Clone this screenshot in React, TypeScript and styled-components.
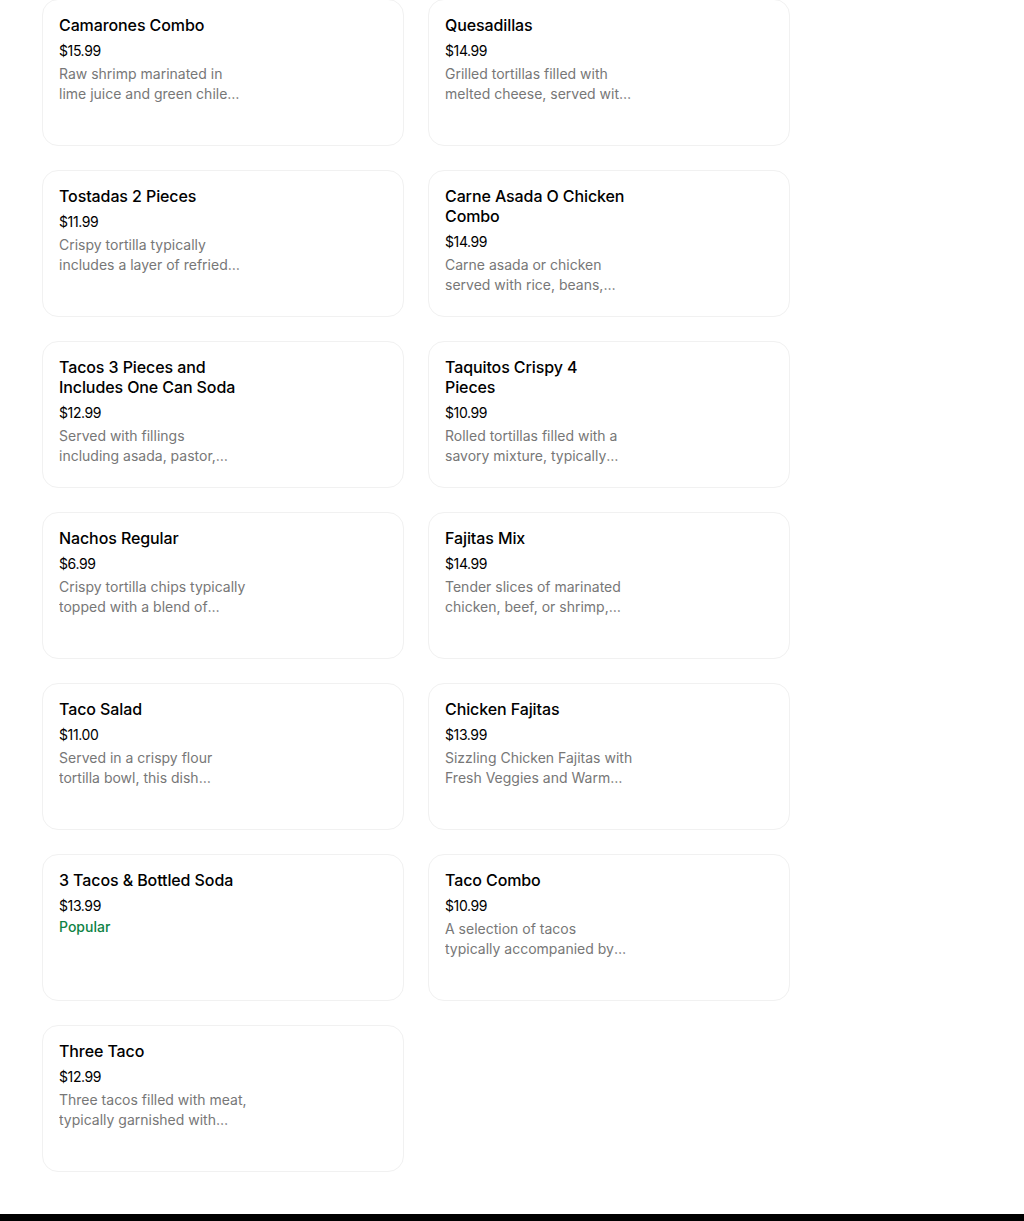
import * as React from 'react';
import styled, { createGlobalStyle } from 'styled-components';

type Item = {
  title: string;
  price: string;
  desc?: string;
  popular?: boolean;
};

const items: Item[] = [
  { title: 'Camarones Combo', price: '$15.99', desc: 'Raw shrimp marinated in lime juice and green chile sauce, served with onions and cucumber.' },
  { title: 'Quesadillas', price: '$14.99', desc: 'Grilled tortillas filled with melted cheese, served with sour cream and guacamole.' },
  { title: 'Tostadas 2 Pieces', price: '$11.99', desc: 'Crispy tortilla typically includes a layer of refried beans, lettuce and cheese.' },
  { title: 'Carne Asada O Chicken Combo', price: '$14.99', desc: 'Carne asada or chicken served with rice, beans, guacamole and tortillas.' },
  { title: 'Tacos 3 Pieces and Includes One Can Soda', price: '$12.99', desc: 'Served with fillings including asada, pastor, chicken or carnitas.' },
  { title: 'Taquitos Crispy 4 Pieces', price: '$10.99', desc: 'Rolled tortillas filled with a savory mixture, typically topped with cream.' },
  { title: 'Nachos Regular', price: '$6.99', desc: 'Crispy tortilla chips typically topped with a blend of cheeses and beans.' },
  { title: 'Fajitas Mix', price: '$14.99', desc: 'Tender slices of marinated chicken, beef, or shrimp, grilled with peppers.' },
  { title: 'Taco Salad', price: '$11.00', desc: 'Served in a crispy flour tortilla bowl, this dish includes lettuce and beans.' },
  { title: 'Chicken Fajitas', price: '$13.99', desc: 'Sizzling Chicken Fajitas with Fresh Veggies and Warm Tortillas.' },
  { title: '3 Tacos & Bottled Soda', price: '$13.99', popular: true },
  { title: 'Taco Combo', price: '$10.99', desc: 'A selection of tacos typically accompanied by rice and beans.' },
  { title: 'Three Taco', price: '$12.99', desc: 'Three tacos filled with meat, typically garnished with onions and cilantro.' },
];

const GlobalStyle = createGlobalStyle`
  body {
    margin: 0;
    background: #ffffff;
    font-family: Inter, "Open Sans", "Liberation Sans", sans-serif;
    color: #000000;
  }
`;

const App = () => {
  return (
    <>
      <GlobalStyle />
      <Page>
        <Grid>
          {items.map((item) => (
            <Card key={item.title}>
              <Info>
                <Title>{item.title}</Title>
                <Price>{item.price}</Price>
                {item.desc && <Desc>{item.desc}</Desc>}
                {item.popular && <Popular>Popular</Popular>}
              </Info>
            </Card>
          ))}
        </Grid>
      </Page>
      <Footer />
    </>
  );
};

export default App;

const Page = styled.div`
  margin-top: -1px;
  padding: 0 0 42px 42px;
`;

const Grid = styled.div`
  display: grid;
  grid-template-columns: 362px 362px;
  gap: 24px;
`;

const Card = styled.div`
  box-sizing: border-box;
  height: 147px;
  border: 1px solid #f1f1f1;
  border-radius: 16px;
  padding: 15px 16px;
  display: flex;
`;

const Info = styled.div`
  width: 188.5px;
  display: flex;
  flex-direction: column;
`;

const Title = styled.div`
  max-width: 184px;
  font-size: 16px;
  line-height: 20px;
  font-weight: 500;
  letter-spacing: -0.1px;
  color: #000000;
`;

const Price = styled.div`
  margin-top: 6px;
  font-size: 14px;
  line-height: 20px;
  color: #000000;
  letter-spacing: -0.4px;
`;

const Desc = styled.div`
  margin-top: 3px;
  font-size: 14px;
  line-height: 20px;
  color: #777777;
  display: -webkit-box;
  -webkit-line-clamp: 2;
  -webkit-box-orient: vertical;
  overflow: hidden;
`;

const Popular = styled.div`
  margin-top: 1px;
  font-size: 14px;
  line-height: 20px;
  font-weight: 500;
  color: #0e8345;
`;

const Footer = styled.div`
  height: 40px;
  background: #000000;
`;
